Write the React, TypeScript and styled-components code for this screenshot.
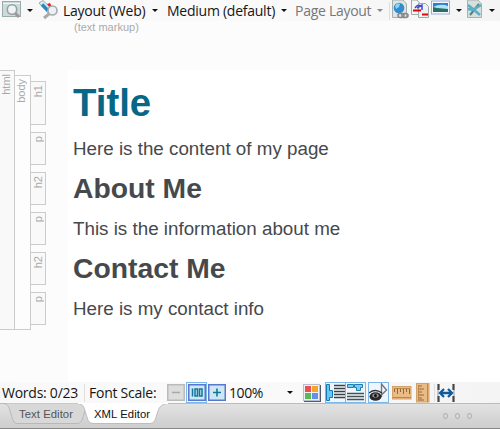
import React from 'react';
import styled, { createGlobalStyle } from 'styled-components';

const GlobalStyle = createGlobalStyle`
  * { box-sizing: border-box; }
  body { margin: 0; overflow: hidden; }
`;

const Window = styled.div`
  width: 500px;
  height: 429px;
  display: flex;
  flex-direction: column;
  background: #fcfcfc;
  font-family: 'Liberation Sans', Arial, sans-serif;
`;

const Bar = styled.div<{ $height: number }>`
  display: flex;
  flex: none;
  align-items: center;
  height: ${p => p.$height}px;
  background: linear-gradient(90deg, #f8f8f8, #fafafa 50%, #f4f4f4);
  overflow: hidden;
`;

const Slot = styled.div<{ $w: number }>`
  display: flex;
  flex: none;
  align-items: center;
  width: ${p => p.$w}px;
  svg { display: block; flex: none; }
`;

const Label = styled.span<{ $muted?: boolean; $spacing?: number }>`
  font-family: 'Open Sans', 'Noto Sans', sans-serif;
  font-size: 14px;
  letter-spacing: ${p => p.$spacing ?? 0}px;
  line-height: 20px;
  white-space: nowrap;
  color: ${p => (p.$muted ? '#777' : '#151515')};
`;

const Arrow = styled.i<{ $muted?: boolean }>`
  border: solid transparent;
  border-width: 3px 3px 0;
  border-top-color: ${p => (p.$muted ? '#888' : '#111')};
`;

const Divider = styled.i`
  width: 1px;
  height: 18px;
  background: #dedede;
`;

const Toggle = styled.div`
  display: flex;
  width: 21px;
  height: 21px;
  border: 1px solid #7db7e8;
  background: #eef6fd;
  align-items: center;
  justify-content: center;
`;

const Workspace = styled.div`
  position: relative;
  display: flex;
  flex: none;
  height: 361px;
`;

const MarkupHint = styled.div`
  position: absolute;
  left: 74px;
  top: 0;
  font-size: 11px;
  line-height: 13px;
  color: #aaa;
`;

const Structure = styled.div`
  display: flex;
  align-items: flex-start;
  width: 68px;
  padding-top: 49px;
`;

const Tag = styled.div<{ $w: number; $h: number; $top?: number; $fill?: string; $inset?: number }>`
  display: flex;
  flex: none;
  width: ${p => p.$w}px;
  height: ${p => p.$h}px;
  margin-top: ${p => p.$top ?? 0}px;
  padding: 3px 0 0 ${p => p.$inset ?? 0}px;
  align-items: flex-start;
  border: 1px solid #ccc;
  border-left: 0;
  background: ${p => p.$fill ?? '#f9f9f9'};
`;

const TagName = styled.span`
  writing-mode: vertical-rl;
  transform: rotate(180deg);
  font-size: 11px;
  line-height: 12px;
  color: #aaa;
`;

const Children = styled.div`
  display: flex;
  flex-direction: column;
  gap: 7px;
  padding-top: 11px;
`;

const Page = styled.article`
  width: 432px;
  height: 312px;
  margin-top: 49px;
  padding: 11px 0 0 5px;
  background: #fff;
  color: #46494c;
  white-space: nowrap;
`;

const Title = styled.h1`
  margin: 0;
  font-size: 38.4px;
  line-height: 44px;
  color: #066787;
`;

const Heading = styled.h2`
  margin: -1px 0 0;
  font-size: 28.3px;
  line-height: 36px;
`;

const Paragraph = styled.p<{ $top?: number }>`
  margin: ${p => p.$top ?? 1}px 0 0;
  font-size: 18.8px;
  line-height: 44px;
`;

const TabBar = styled.div`
  position: relative;
  display: flex;
  flex: none;
  height: 26px;
  background: linear-gradient(#e2e2e2, #cecece 95%);
  border-top: 1px solid #bbb;
  border-bottom: 1px solid #888;
`;

const TabShape = styled.svg`
  position: absolute;
  left: 0;
  top: -1px;
`;

const Tab = styled.div<{ $w: number; $active?: boolean }>`
  position: relative;
  width: ${p => p.$w}px;
  font-size: 11.3px;
  letter-spacing: 0.06px;
  line-height: 20px;
  white-space: nowrap;
  color: ${p => (p.$active ? '#111' : '#555')};
`;

const Dots = styled.div`
  display: flex;
  gap: 7px;
  margin: 9px 28px 0 auto;
`;

const Dot = styled.i`
  width: 5px;
  height: 6px;
  border: 1px solid #b4b4b4;
  border-radius: 50%;
`;

const Preview = () => (
  <svg width="22" height="21" viewBox="0 0 22 21">
    <rect x="2.5" y="1.5" width="18" height="15" fill="#cadbd9" stroke="#9aaba9" />
    <path d="M3 3.5h17" stroke="#eef5f3" />
    <path d="M15 13l4 4" stroke="#999" strokeWidth="3" />
    <circle cx="12" cy="9.5" r="4.7" fill="#eef4f6" stroke="#9b9f9f" strokeWidth="1.6" />
  </svg>
);

const StylePicker = () => (
  <svg width="20" height="21" viewBox="0 0 20 21">
    <path d="M0 3l4-2.5 9 8.5-3 5z" fill="#dcebef" stroke="#9aabb0" />
    <path d="M3 4.5l6 6" stroke="#2489bd" strokeWidth="3.4" />
    <path d="M8 4l3-1 2 4-2 1z" fill="#e32028" />
    <path d="M10 14l-5 4" stroke="#aaa" strokeWidth="3" />
    <circle cx="13.5" cy="10.5" r="4.5" fill="#eaf0f5" stroke="#a7abad" strokeWidth="1.6" />
  </svg>
);

const LinkPage = () => (
  <svg width="18" height="21" viewBox="0 0 18 21">
    <path d="M.5 0v17.5h14V4L11 0z" fill="#dce5e3" stroke="#a4b0ae" />
    <circle cx="7" cy="8" r="5.3" fill="#338ccc" />
    <path d="M3 6q2-4 5-2l-1 3-3 2z" fill="#8bd2f8" />
    <g fill="none" stroke="#888" strokeWidth="1.6"><rect x="6" y="13.5" width="6" height="4" rx="2" /><rect x="10" y="13.5" width="6" height="4" rx="2" /></g>
  </svg>
);

const Compare = () => (
  <svg width="20" height="21" viewBox="0 0 20 21">
    <path d="M1.5 0v14.5h8V3L7 0z" fill="#f5f7f6" stroke="#9eaaa8" />
    <path d="M8.5 3.5h7l3 3v11h-10z" fill="#edf2f0" stroke="#9eaaa8" />
    <path d="M5 8q3-5 7-1M7 8l5-3v5" fill="none" stroke="#424bd2" strokeWidth="1.5" />
    <path d="M3 10.5h8M12 14.5h6" stroke="#dc0713" strokeWidth="2.2" />
  </svg>
);

const Picture = () => (
  <svg width="20" height="21" viewBox="0 0 20 21">
    <rect x=".5" y="1" width="18" height="13" fill="#f3f7fc" stroke="#9cadd8" />
    <path d="M2 3h15v6H2z" fill="#2882d2" /><path d="M2 7q8-4 15-1v3H2z" fill="#b1e2f7" />
    <path d="M2 7l4 1 11 1v3H2z" fill="#286d66" />
  </svg>
);

const CrossPage = () => (
  <svg width="16" height="21" viewBox="0 0 16 21">
    <path d="M.5 0v17.5h14V4L11 0z" fill="#d5dfdb" stroke="#a5b2ae" />
    <path d="M3 15L12 4" stroke="#557e88" strokeWidth="2" /><path d="M1 5l5 4 7 6M1 9l5 1 8-5" fill="none" stroke="#5baec3" strokeWidth="2.5" />
  </svg>
);

const ScaleButton = ({ kind }: { kind: 'minus' | 'reset' | 'plus' }) => {
  const off = kind === 'minus';
  const ink = off ? '#aaa' : '#13759c';
  return (
    <svg width="18" height="17" viewBox="0 0 18 17">
      <rect x=".75" y=".75" width="16.5" height="15.5" fill={off ? '#ddd' : '#cde8f2'} stroke={off ? '#bbb' : '#5878d0'} strokeWidth="1.5" />
      {kind === 'reset'
        ? <g fill="none" stroke={ink} strokeWidth="1.5"><path d="M4.5 4.5v8" /><rect x="7" y="5" width="2.5" height="7" /><rect x="11.5" y="5" width="2.5" height="7" /></g>
        : <path d={off ? 'M5 8.5h8' : 'M5 8.5h8M9 4.5v8'} stroke={ink} strokeWidth="1.6" />}
    </svg>
  );
};

const Palette = () => (
  <svg width="18" height="18" viewBox="0 0 18 18">
    <path d="M1 17h16V1" fill="none" stroke="#54586b" strokeWidth="2" />
    <rect x=".5" y=".5" width="16" height="16" fill="#eff0f6" stroke="#b9bdd0" />
    <path d="M2 2h6v6H2z" fill="#e85150" /><path d="M9 2h6v6H9z" fill="#f2a72c" />
    <path d="M2 9h6v6H2z" fill="#59ba54" /><path d="M9 9h6v6H9z" fill="#678fea" />
  </svg>
);

const SideTags = () => (
  <svg width="19" height="19" viewBox="0 0 19 19">
    <path d="M.5 1.5h3v6h3v7h-3v3h-3z" fill="#66c7f2" stroke="#1678b3" />
    <path d="M8 2.5h11M8 5.5h11M8 8.5h11M8 11.5h11M8 14.5h11" stroke="#3c4144" strokeWidth="1.7" />
  </svg>
);

const TopTags = () => (
  <svg width="19" height="19" viewBox="0 0 19 19">
    <path d="M1.5 1.5h6v3h-6zM8.5 1.5h8v3h-2v3h-4v-3h-2z" fill="#78d0f6" stroke="#217dad" />
    <path d="M1 10.5h17M1 13.5h17M1 16.5h17" stroke="#46524d" strokeWidth="1.7" />
  </svg>
);

const EyeNote = () => (
  <svg width="19" height="19" viewBox="0 0 19 19">
    <path d="M12.5 14V1l5 6-5 5" fill="none" stroke="#777" strokeWidth="1.4" />
    <path d="M0 10q6-5 13 0" fill="none" stroke="#333" strokeWidth="1.3" />
    <ellipse cx="6.5" cy="13.5" rx="6" ry="4.3" fill="#282828" /><ellipse cx="6.5" cy="12.5" rx="3.2" ry="2" fill="#929292" /><circle cx="6.5" cy="12.5" r="1.5" fill="#111" />
  </svg>
);

const Ruler = ({ vertical }: { vertical?: boolean }) => (
  <svg width={vertical ? 14 : 20} height={vertical ? 20 : 14} viewBox={vertical ? '0 0 14 20' : '0 0 20 14'}>
    {vertical
      ? <><rect x=".5" y=".5" width="12.5" height="18.5" fill="#eabc84" stroke="#d4a169" /><path d="M3 3h3M3 6h5M3 9h3M3 12h5M3 15h3M3 17h5" stroke="#8f6840" /><path d="M2.5 2v16M11.5 1v18" stroke="#b98752" /></>
      : <><rect x=".5" y=".5" width="18.5" height="12.5" fill="#eabc84" stroke="#d4a169" /><path d="M2.5 3v3M5.5 3v5M8.5 3v3M11.5 3v5M14.5 3v3M17.5 3v5" stroke="#8f6840" /><path d="M2 2.5h16M1 11.5h18" stroke="#b98752" /></>}
  </svg>
);

const FitWidth = () => (
  <svg width="18" height="18" viewBox="0 0 18 18">
    <path d="M1.5 0v6M16.5 0v6M1.5 12v6M16.5 12v6" stroke="#454545" strokeWidth="2.2" />
    <path d="M1 6v6M17 6v6" stroke="#999" />
    <path d="M4 9h10M7 5L3 9l4 4M11 5l4 4-4 4" fill="none" stroke="#0f5c9d" strokeWidth="2.3" />
  </svg>
);

const childTags: [string, number][] = [['h1', 44], ['p', 33], ['h2', 33], ['p', 33], ['h2', 33], ['p', 33]];

export default function App() {
  return (
    <>
      <GlobalStyle />
      <Window>
        <Bar $height={21}>
          <Slot $w={27}><Preview /></Slot>
          <Slot $w={12}><Arrow /></Slot>
          <Slot $w={24}><StylePicker /></Slot>
          <Slot $w={89}><Label $spacing={-0.25}>Layout (Web)</Label></Slot>
          <Slot $w={15}><Arrow /></Slot>
          <Slot $w={114}><Label $spacing={-0.25}>Medium (default)</Label></Slot>
          <Slot $w={14}><Arrow /></Slot>
          <Slot $w={82}><Label $muted $spacing={-0.28}>Page Layout</Label></Slot>
          <Slot $w={12}><Arrow $muted /></Slot>
          <Slot $w={3}><Divider /></Slot>
          <Slot $w={18}><LinkPage /></Slot>
          <Slot $w={21}><Compare /></Slot>
          <Slot $w={25}><Picture /></Slot>
          <Slot $w={11}><Arrow /></Slot>
          <Slot $w={22}><CrossPage /></Slot>
          <Slot $w={8}><Arrow /></Slot>
        </Bar>

        <Workspace>
          <MarkupHint>(text markup)</MarkupHint>
          <Structure>
            <Tag $w={15} $h={260}><TagName>html</TagName></Tag>
            <Tag $w={16} $h={255} $top={5} $fill="#fdfdfd"><TagName>body</TagName></Tag>
            <Children>
              {childTags.map(([name, height], i) => <Tag key={i} $w={15} $h={height} $inset={1}><TagName>{name}</TagName></Tag>)}
            </Children>
          </Structure>
          <Page>
            <Title>Title</Title>
            <Paragraph $top={2}>Here is the content of my page</Paragraph>
            <Heading>About Me</Heading>
            <Paragraph>This is the information about me</Paragraph>
            <Heading>Contact Me</Heading>
            <Paragraph>Here is my contact info</Paragraph>
          </Page>
        </Workspace>

        <Bar $height={21}>
          <Slot $w={2} />
          <Slot $w={82}><Label $spacing={-0.25}>Words: 0/23</Label></Slot>
          <Slot $w={5}><Divider /></Slot>
          <Slot $w={78}><Label $spacing={-0.25}>Font Scale:</Label></Slot>
          <Slot $w={19}><ScaleButton kind="minus" /></Slot>
          <Slot $w={22}><Toggle><ScaleButton kind="reset" /></Toggle></Slot>
          <Slot $w={21}><ScaleButton kind="plus" /></Slot>
          <Slot $w={58}><Label $spacing={-0.4}>100%</Label></Slot>
          <Slot $w={16}><Arrow /></Slot>
          <Slot $w={22}><Palette /></Slot>
          <Slot $w={20}><Toggle><SideTags /></Toggle></Slot>
          <Slot $w={23}><Toggle><TopTags /></Toggle></Slot>
          <Slot $w={24}><Toggle><EyeNote /></Toggle></Slot>
          <Slot $w={24}><Ruler /></Slot>
          <Slot $w={18}><Ruler vertical /></Slot>
          <Slot $w={3}><Divider /></Slot>
          <Slot $w={20}><FitWidth /></Slot>
        </Bar>

        <TabBar>
          <TabShape width="174" height="25" viewBox="0 0 174 25">
            <path d="M3 .5C9 1 9 5 11 11S13 20.5 18 20.5H76C82 20.5 82 17 84 11S86 1 91 .5" fill="#d8d8d8" stroke="#b8b8b8" />
            <path d="M78 .5C84 1 84 5 86 11S88 20.5 94 20.5H149C155 20.5 155 17 157 11S160 1 168 .5" fill="#fff" stroke="#bdbdbd" />
            <path d="M78 .5H168" stroke="#fff" />
          </TabShape>
          <Slot $w={19} />
          <Tab $w={75}>Text Editor</Tab>
          <Tab $w={70} $active>XML Editor</Tab>
          <Dots><Dot /><Dot /><Dot /></Dots>
        </TabBar>
      </Window>
    </>
  );
}
